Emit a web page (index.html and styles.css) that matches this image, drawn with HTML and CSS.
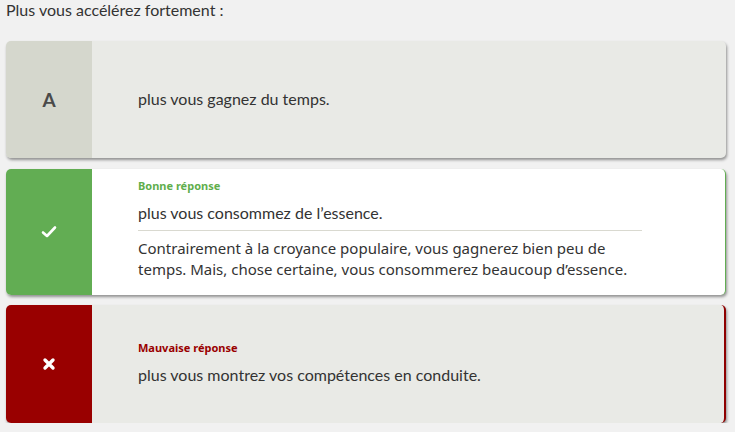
FILE: index.html
```html
<!DOCTYPE html>
<html lang="fr">
<head>
<meta charset="utf-8">
<link rel="stylesheet" href="styles.css">
</head>
<body>
<div class="quiz">
  <p class="question">Plus vous accélérez fortement :</p>
  <div class="card card-neutral">
    <div class="badge">A</div>
    <div class="content">
      <p class="answer">plus vous gagnez du temps.</p>
    </div>
  </div>
  <div class="card card-good">
    <div class="badge">
      <svg width="16" height="14" viewBox="0 0 16 14"><path d="M2 7.5 L6 11 L14 2.5" fill="none" stroke="#fff" stroke-width="2.6" stroke-linecap="round" stroke-linejoin="round"/></svg>
    </div>
    <div class="content">
      <p class="label label-good">Bonne réponse</p>
      <p class="answer">plus vous consommez de l’essence.</p>
      <p class="explain">Contrairement à la croyance populaire, vous gagnerez bien peu de temps. Mais, chose certaine, vous consommerez beaucoup d’essence.</p>
    </div>
  </div>
  <div class="card card-bad">
    <div class="badge">
      <svg width="14" height="14" viewBox="0 0 14 14"><path d="M3 3 L11 11 M11 3 L3 11" fill="none" stroke="#fff" stroke-width="3.4" stroke-linecap="round"/></svg>
    </div>
    <div class="content">
      <p class="label label-bad">Mauvaise réponse</p>
      <p class="answer">plus vous montrez vos compétences en conduite.</p>
    </div>
  </div>
</div>
</body>
</html>
```
FILE: styles.css
```css
html, body {
  margin: 0;
  padding: 0;
  background: #f1f1f1;
}
body {
  font-family: Lato, "Liberation Sans", sans-serif;
  color: #333;
}
.quiz {
  padding: 0 9px 0 6px;
}
p {
  margin: 0;
}
.question {
  font-size: 16px;
  line-height: 20px;
  padding-top: 0;
  margin-bottom: 21px;
}
.card {
  display: flex;
  min-height: 117px;
  border-radius: 5px;
  overflow: hidden;
  background: #e9eae6;
  box-shadow: 1px 2px 3px rgba(0, 0, 0, 0.4);
  margin-bottom: 11px;
}
.badge {
  width: 86px;
  flex: none;
  display: flex;
  align-items: center;
  justify-content: center;
  background: #d5d7cd;
  color: #4a4a4a;
  font-size: 19px;
  font-weight: 700;
}
.content {
  flex: 1;
  display: flex;
  flex-direction: column;
  justify-content: center;
  padding: 11px 83px 13px 46px;
}
.answer {
  font-size: 16px;
  line-height: 20px;
}
.card-good {
  background: #fff;
  min-height: 126px;
  border-right: 1px solid #62ad53;
  margin-bottom: 10px;
}
.card-good .content {
  justify-content: flex-start;
  padding: 10px 83px 14px 46px;
}
.card-good .badge {
  background: #62ad53;
}
.card-good .answer {
  padding-bottom: 7px;
  border-bottom: 1px solid #d9d9d0;
}
.card-bad {
  border-right: 2px solid #8e0000;
  min-height: 118px;
  margin-bottom: 0;
}
.card-bad .badge {
  background: #990000;
}
.label {
  font-family: "Noto Sans", "Open Sans", sans-serif;
  font-size: 11px;
  font-weight: 700;
  line-height: 14px;
  margin-bottom: 10px;
}
.label-good {
  color: #5fae4c;
}
.label-bad {
  color: #990000;
}
.explain {
  font-family: "Noto Sans", "Open Sans", sans-serif;
  font-size: 15px;
  line-height: 21px;
  padding-top: 7px;
}
```
